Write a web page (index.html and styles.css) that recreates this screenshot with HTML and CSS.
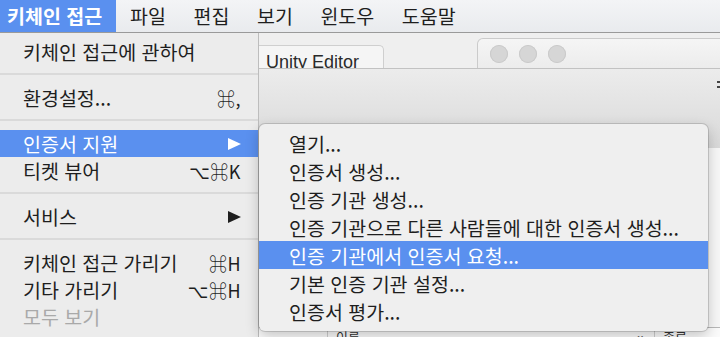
FILE: index.html
```html
<!DOCTYPE html>
<html lang="ko">
<head>
<meta charset="utf-8">
<title>키체인 접근</title>
<link rel="stylesheet" href="styles.css">
</head>
<body>
<div class="screen">
 <div class="menubar">
  <span class="item app">키체인 접근</span>
  <span class="item">파일</span>
  <span class="item">편집</span>
  <span class="item">보기</span>
  <span class="item">윈도우</span>
  <span class="item">도움말</span>
 </div>

 <div class="desk">
  <!-- windows behind the menus -->
  <div class="tab"><span>Unity Editor</span></div>
  <div class="win-front">
   <span class="light"></span><span class="light"></span><span class="light"></span>
  </div>
  <div class="panel">
   <div class="toolbar"><span class="more"></span></div>
   <div class="list">
    <div class="thead">
     <div class="col col-a"></div>
     <div class="col col-b"><span>이름</span><span class="dots">··</span></div>
     <div class="col col-c">종류</div>
    </div>
   </div>
  </div>

  <!-- app menu -->
  <div class="menu main">
   <div class="row"><span>키체인 접근에 관하여</span></div>
   <div class="sep"></div>
   <div class="row"><span>환경설정...</span><span class="key">⌘,</span></div>
   <div class="sep"></div>
   <div class="row on"><span>인증서 지원</span><span class="arrow"></span></div>
   <div class="row"><span>티켓 뷰어</span><span class="key">⌥⌘K</span></div>
   <div class="sep"></div>
   <div class="row"><span>서비스</span><span class="arrow"></span></div>
   <div class="sep"></div>
   <div class="row"><span>키체인 접근 가리기</span><span class="key">⌘H</span></div>
   <div class="row"><span>기타 가리기</span><span class="key">⌥⌘H</span></div>
   <div class="row off"><span>모두 보기</span></div>
  </div>

  <!-- submenu -->
  <div class="menu sub">
   <div class="row">열기...</div>
   <div class="row">인증서 생성...</div>
   <div class="row">인증 기관 생성...</div>
   <div class="row">인증 기관으로 다른 사람들에 대한 인증서 생성...</div>
   <div class="row on">인증 기관에서 인증서 요청...</div>
   <div class="row">기본 인증 기관 설정...</div>
   <div class="row">인증서 평가...</div>
  </div>
 </div>
</div>
</body>
</html>
```

FILE: styles.css
```css
body {
 margin: 0;
 font-family: "Noto Sans CJK KR", "DejaVu Sans", sans-serif;
 color: #1e1e1e;
}
.screen {
 width: 720px;
 height: 337px;
 overflow: hidden;
 background: #ededed;
}

/* menu bar */
.menubar {
 display: flex;
 height: 32px;
 border-bottom: 1px solid #9a9a9a;
 background: linear-gradient(#f3f4f6, #e9ebee);
 font-size: 19.5px;
 line-height: 32px;
}
.menubar .item { padding: 0 13.8px; }
.menubar .app {
 padding: 0 14px 0 7px;
 background: #5a90ef;
 color: #fff;
 font-weight: bold;
}

.desk {
 position: relative;
 height: 304px;
 background: #efefef;
}

/* background windows */
.tab {
 position: absolute;
 left: 258px;
 top: 12px;
 width: 124px;
 height: 23px;
 border: 1px solid #cfcfcf;
 border-bottom: 0;
 border-radius: 0 5px 0 0;
 background: #f5f5f5;
 overflow: hidden;
 font-family: "Liberation Sans", Arial, sans-serif;
 font-size: 18px;
 line-height: 30px;
 color: #2a2a2a;
}
.tab span { display: block; padding: 1px 0 0 7px; }
.win-front {
 position: absolute;
 left: 477px;
 top: 5px;
 width: 260px;
 height: 30px;
 border: 1px solid #cbcbcb;
 border-bottom: 0;
 border-radius: 6px 0 0 0;
 background: linear-gradient(#f5f5f5, #ececec);
 display: flex;
 gap: 11px;
 padding: 6px 0 0 12px;
 box-sizing: border-box;
}
.light {
 width: 18px;
 height: 18px;
 border-radius: 50%;
 background: #d6d6d6;
 box-shadow: inset 0 0 0 1px #cacaca;
}
.panel {
 position: absolute;
 left: 258px;
 right: 0;
 top: 35px;
 bottom: 0;
 display: flex;
 flex-direction: column;
 border-top: 1px solid #c2c2c2;
}
.toolbar {
 height: 79px;
 background: linear-gradient(#ececec, #d9d9d9);
 display: flex;
 justify-content: flex-end;
 padding-top: 12px;
 box-sizing: border-box;
}
.more {
 width: 3px;
 height: 3px;
 border-top: 2px solid #444;
 border-bottom: 2px solid #444;
}
.list {
 flex: 1;
 background: #f7f7f7;
 display: flex;
 flex-direction: column;
 justify-content: flex-end;
}
.thead {
 display: grid;
 grid-template-columns: 70px 327px 1fr;
 height: 9px;
 border-top: 1px solid #b8b8b8;
 background: #fbfbfb;
 font-size: 13px;
 line-height: 18px;
 color: #333;
 overflow: hidden;
}
.col { padding-left: 8px; border-right: 1px solid #cfcfcf; }
.col-b { display: flex; justify-content: space-between; padding-right: 10px; }
.col-c { border-right: 0; }

/* menus */
.menu {
 position: absolute;
 font-size: 19.5px;
 background: #ececec;
}
.menu .row {
 display: flex;
 align-items: center;
 justify-content: space-between;
 white-space: nowrap;
}
.menu .on { background: #5a90ef; color: #fff; }
.menu .off { color: #a9a9a9; }
.main {
 left: 0;
 top: 0;
 width: 258px;
 bottom: 0;
 padding-top: 5px;
 border-right: 1px solid #bdbdbd;
}
.main .row {
 height: 27px;
 padding: 0 17px 0 23px;
}
.sep {
 height: 2px;
 margin: 8px 0 9px;
 background: #dadada;
}
.key { font-size: 18px; letter-spacing: 0.5px; }
.arrow {
 width: 0;
 height: 0;
 border-left: 13px solid currentColor;
 border-top: 6px solid transparent;
 border-bottom: 6px solid transparent;
}
.sub {
 left: 259px;
 top: 91px;
 width: 449px;
 padding: 5px 0 6px;
 border-radius: 6px;
 background: #efefef;
 box-shadow: 0 0 0 1px rgba(0, 0, 0, 0.14), 0 5px 14px rgba(0, 0, 0, 0.22);
}
.sub .row {
 height: 28px;
 padding-left: 30px;
}
```
